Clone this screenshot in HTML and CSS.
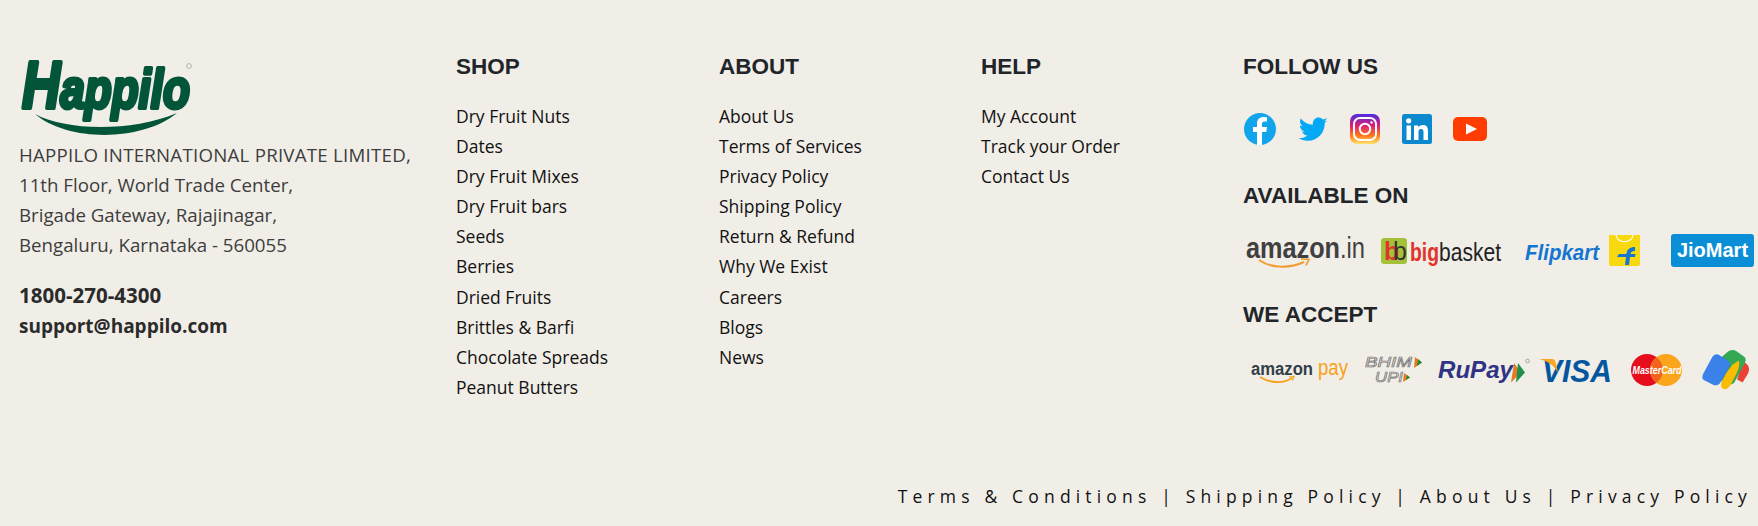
FILE: index.html
```html
<!DOCTYPE html>
<html lang="en">
<head>
<meta charset="UTF-8">
<meta name="viewport" content="width=device-width, initial-scale=1.0">
<title>Happilo Footer</title>
<link rel="stylesheet" href="styles.css">
</head>
<body>
<footer class="footer">
  <div class="footer-main">
    <div class="company">
      <svg class="logo" width="175" height="80" viewBox="0 0 175 80">
        <text class="logo-word" x="3" y="51" textLength="168" lengthAdjust="spacingAndGlyphs"><tspan class="logo-cap">H</tspan>appilo</text>
        <path d="M16 57 C45 73 110 76 158 56 C125 84 50 86 16 57 Z" fill="#03553a"/>
        <circle cx="170" cy="9" r="2.400" fill="none" stroke="#9aa89f" stroke-width="0.800"/>
      </svg>
      <p class="address"><span class="caps">HAPPILO INTERNATIONAL PRIVATE LIMITED,</span><br>11th Floor, World Trade Center,<br>Brigade Gateway, Rajajinagar,<br>Bengaluru, Karnataka - 560055</p>
      <p class="contact phone">1800-270-4300</p>
      <p class="contact">support@happilo.com</p>
    </div>

    <div class="links">
      <h3>SHOP</h3>
      <ul>
        <li>Dry Fruit Nuts</li>
        <li>Dates</li>
        <li>Dry Fruit Mixes</li>
        <li>Dry Fruit bars</li>
        <li>Seeds</li>
        <li>Berries</li>
        <li>Dried Fruits</li>
        <li>Brittles &amp; Barfi</li>
        <li>Chocolate Spreads</li>
        <li>Peanut Butters</li>
      </ul>
    </div>

    <div class="links">
      <h3>ABOUT</h3>
      <ul>
        <li>About Us</li>
        <li>Terms of Services</li>
        <li>Privacy Policy</li>
        <li>Shipping Policy</li>
        <li>Return &amp; Refund</li>
        <li>Why We Exist</li>
        <li>Careers</li>
        <li>Blogs</li>
        <li>News</li>
      </ul>
    </div>

    <div class="links">
      <h3>HELP</h3>
      <ul>
        <li>My Account</li>
        <li>Track your Order</li>
        <li>Contact Us</li>
      </ul>
    </div>

    <div class="side">
      <h3>FOLLOW US</h3>
      <div class="social">
        <svg width="32" height="32" viewBox="0 0 32 32">
          <circle cx="16" cy="16" r="16" fill="#12a5ec"/>
          <path d="M18 32V19h4.300l.7-5h-5v-3c0-1.500.6-2.500 2.600-2.500H23V4.200C22.400 4.100 21 4 19.500 4 15.800 4 13 6.200 13 10.500V14H9v5h4v13z" fill="#fff"/>
        </svg>
        <svg width="30" height="32" viewBox="0 0 30 32">
          <path d="M29.500 7.500c-1.100.5-2.200.8-3.400.9 1.200-.7 2.200-1.900 2.600-3.300-1.100.7-2.400 1.200-3.700 1.400C23.900 5.300 22.400 4.500 20.700 4.500c-3.300 0-5.900 2.700-5.900 6 0 .5.100.9.200 1.300C10 11.600 5.700 9.200 2.800 5.600 1.300 8.300 2.100 11.400 4.600 13.300c-1 0-1.900-.3-2.700-.7 0 2.900 2 5.300 4.800 5.900-.9.200-1.800.3-2.700.1.800 2.300 2.900 4 5.500 4-2.500 2-5.700 2.900-9 2.500 2.700 1.700 5.800 2.700 9.200 2.700 11 0 17-9.200 17-17.100v-.8c1.100-.8 2.100-1.900 2.800-2.700z" fill="#03a9f4"/>
        </svg>
        <svg width="30" height="32" viewBox="0 0 30 32">
          <defs>
            <linearGradient id="insta" x1="0.500" y1="1" x2="0.500" y2="0">
              <stop offset="0" stop-color="#ffe46a"/>
              <stop offset="0.280" stop-color="#ff7a1a"/>
              <stop offset="0.600" stop-color="#e0206f"/>
              <stop offset="1" stop-color="#4a2be8"/>
            </linearGradient>
          </defs>
          <rect y="1" width="30" height="30" rx="7" fill="url(#insta)"/>
          <rect x="4" y="5" width="22" height="22" rx="6" fill="none" stroke="#fff" stroke-width="2"/>
          <circle cx="15" cy="16" r="5.200" fill="none" stroke="#fff" stroke-width="2"/>
          <circle cx="21.500" cy="9.500" r="1.200" fill="#fff"/>
        </svg>
        <svg width="30" height="32" viewBox="0 0 30 32">
          <rect y="1" width="30" height="30" rx="2.500" fill="#0b88ce"/>
          <rect x="4.500" y="12.500" width="4.500" height="14.500" fill="#fff"/>
          <circle cx="6.700" cy="7.800" r="2.600" fill="#fff"/>
          <path d="M12 12.500h4.300v2c.8-1.400 2.400-2.400 4.500-2.400 4.200 0 5.200 2.700 5.200 6.500V27h-4.500v-7.500c0-1.800-.3-3.500-2.500-3.500s-2.500 1.700-2.500 3.600V27H12z" fill="#fff"/>
        </svg>
        <svg class="youtube" width="34" height="32" viewBox="0 0 34 32">
          <rect y="4" width="34" height="24" rx="5" fill="#ff3d00"/>
          <path d="M13 10.500 24 16 13 21.500z" fill="#fff"/>
        </svg>
      </div>

      <h3 class="available-title">AVAILABLE ON</h3>
      <div class="brands">
        <svg width="122" height="38" viewBox="0 0 122 38">
          <text class="amazon-word" x="3" y="26" textLength="94" lengthAdjust="spacingAndGlyphs">amazon</text>
          <text class="amazon-in" x="97" y="26" textLength="25" lengthAdjust="spacingAndGlyphs">.in</text>
          <path d="M16 28c11 8 30 9 45 2" fill="none" stroke="#f39a2e" stroke-width="2"/>
          <path d="M58 27l8 .5-3 6" fill="none" stroke="#f39a2e" stroke-width="1.600"/>
        </svg>
        <svg class="bigbasket" width="122" height="38" viewBox="0 0 122 38">
          <rect y="6" width="26" height="26" rx="3" fill="#a5c13a"/>
          <text class="bb-mark" x="3" y="28">b</text>
          <text class="bb-mark-dark" x="12" y="28">b</text>
          <text class="bb-big" x="29" y="29" textLength="29" lengthAdjust="spacingAndGlyphs">big</text>
          <text class="bb-basket" x="58" y="29" textLength="62" lengthAdjust="spacingAndGlyphs">basket</text>
        </svg>
        <svg class="flipkart" width="116" height="38" viewBox="0 0 116 38">
          <text class="fk-word" x="0" y="28" textLength="74" lengthAdjust="spacingAndGlyphs">Flipkart</text>
          <path d="M84 3h31v29a2 2 0 0 1-2 2H86a2 2 0 0 1-2-2z" fill="#f8d80f"/>
          <path d="M91 3c1 9 16 9 17 0" fill="none" stroke="#fff" stroke-width="1.200"/>
          <path d="M92 25h9l-1 8h4l1-8h5l.5-3h-5c.2-2 1.500-3 4.500-3v-4c-5 0-8 2-8.500 7H94z" fill="#1476d2"/>
        </svg>
        <div class="jiomart">JioMart</div>
      </div>

      <h3 class="accept-title">WE ACCEPT</h3>
      <div class="payments">
        <svg width="100" height="42" viewBox="0 0 100 42">
          <text class="apay-word" x="1" y="25" textLength="62" lengthAdjust="spacingAndGlyphs">amazon</text>
          <text class="apay-pay" x="68" y="25" textLength="30" lengthAdjust="spacingAndGlyphs">pay</text>
          <path d="M10 27c9 6 23 7 32 1" fill="none" stroke="#f7a11a" stroke-width="1.800"/>
          <path d="M39 27l5-.5-1.500 4" fill="none" stroke="#f7a11a" stroke-width="1.200"/>
        </svg>
        <svg class="upi" width="58" height="42" viewBox="0 0 58 42">
          <text class="upi-word" x="0" y="17" textLength="47" lengthAdjust="spacingAndGlyphs">BHIM</text>
          <path d="M50 7l7 5.500-8 5.500z" fill="#e97a1e"/>
          <path d="M53 9l4 3.500-5 3.500z" fill="#1f8a3a"/>
          <text class="upi-word" x="10" y="32" textLength="28" lengthAdjust="spacingAndGlyphs">UPI</text>
          <path d="M39 23l6 4.500-7 4.500z" fill="#e97a1e"/>
          <path d="M42 25l3 2.500-4 2.500z" fill="#1f8a3a"/>
        </svg>
        <svg class="rupay" width="92" height="42" viewBox="0 0 92 42">
          <text class="rupay-word" x="0" y="28" textLength="75" lengthAdjust="spacingAndGlyphs">RuPay</text>
          <path d="M76 13l7 9.500-10 10z" fill="#e57a28"/>
          <path d="M80 13l7 9.500-9 10z" fill="#1f8f4a"/>
          <circle cx="89.500" cy="11" r="1.800" fill="none" stroke="#777" stroke-width="0.600"/>
        </svg>
        <svg class="visa" width="74" height="42" viewBox="0 0 74 42">
          <text class="visa-word" x="3" y="32" textLength="70" lengthAdjust="spacingAndGlyphs">VISA</text>
          <path d="M0 9h13c2 0 3 1 3.500 3l2.500 11C16 16 9 11 0 9z" fill="#f7a823"/>
        </svg>
        <svg class="mastercard" width="52" height="42" viewBox="0 0 52 42">
          <circle cx="16" cy="20" r="16" fill="#e60d1d"/>
          <circle cx="35" cy="20" r="16" fill="#fba51c"/>
          <path d="M25.500 7.200a16 16 0 0 1 0 25.600 16 16 0 0 1 0-25.600z" fill="#f2641e"/>
          <text class="mc-word" x="1.500" y="24" textLength="49" lengthAdjust="spacingAndGlyphs">MasterCard</text>
        </svg>
        <svg class="gpay" width="48" height="41" viewBox="1 2 52 39" preserveAspectRatio="none">
          <path d="M33 6l11 6c6 3 10 6 7 12l-6 9-6-3 6-17z" fill="#ea4335"/>
          <path d="M13 16l14-11c4-3 7-4 11-2l8 5c3 2 3 4 1 7L36 33c-3 3-10 3-13 0z" fill="#34a853"/>
          <path d="M25 28c2-5 6-8 9-12l7-4c1 4 0 8-3 13l-6 10c-2 3-5 5-8 4-4-2-2-7 1-11z" fill="#fbbc04"/>
          <path d="M2 25 12 9c2-3 5-4 8-2l9 5c3 2 3 4 1 7L21 33c-2 3-5 3-8 2l-9-4c-3-1-3-3-2-6z" fill="#3a81ea"/>
        </svg>
      </div>
    </div>
  </div>

  <div class="footer-bottom">Terms &amp; Conditions | Shipping Policy | About Us | Privacy Policy</div>
</footer>
</body>
</html>
```

FILE: styles.css
```css
body {
  margin: 0;
  background-color: #f1eee8;
  font-family: "Open Sans", sans-serif;
}
svg {
  display: block;
  overflow: visible;
}
.footer {
  height: 526px;
  display: flex;
  flex-direction: column;
  justify-content: space-between;
  overflow: hidden;
}
.footer-main {
  display: grid;
  grid-template-columns: 456px 263px 262px 262px 1fr;
  padding-top: 54px;
}
h3 {
  margin: 0 0 21px;
  font-family: "Liberation Sans", Arial, sans-serif;
  font-size: 22.5px;
  line-height: 26px;
  font-weight: 700;
  color: #212529;
}

/* company block */
.company {
  padding-left: 19px;
}
.logo {
  margin-top: 3px;
}
.logo-word {
  font-family: "Liberation Sans", Arial, sans-serif;
  font-size: 55px;
  font-weight: 700;
  font-style: italic;
  fill: #03553a;
  stroke: #03553a;
  stroke-width: 4px;
  stroke-linejoin: round;
}
.logo-cap {
  font-size: 66px;
}
.address {
  margin: 3px 0 21px;
  font-size: 18.7px;
  line-height: 30px;
  color: #3d3d3d;
}
.caps {
  letter-spacing: 0.24px;
}
.contact {
  margin: 0 0 3px;
  font-size: 19px;
  line-height: 28px;
  font-weight: 700;
  color: #2b2b2b;
}
.phone {
  font-size: 20.5px;
}

/* link columns */
.links ul {
  margin: 0;
  padding: 0;
  list-style: none;
}
.links li {
  font-size: 17.5px;
  line-height: 30.1px;
  color: #111;
}

/* right column */
.side h3 {
  margin-bottom: 0;
}
.social {
  display: flex;
  gap: 22px;
  margin-top: 33px;
  padding-left: 1px;
}
.youtube {
  margin-left: -1px;
}
.side .available-title {
  margin-top: 38px;
}
.brands {
  display: flex;
  align-items: flex-start;
  margin-top: 23px;
  gap: 15px;
}
.bigbasket {
  margin-left: 1px;
}
.flipkart {
  margin-left: 7px;
}
.jiomart {
  margin: 2px 0 0 15px;
  width: 83px;
  height: 33px;
  background-color: #0a8fd6;
  border-radius: 3px;
  color: #fff;
  font-family: "Liberation Sans", Arial, sans-serif;
  font-size: 20px;
  font-weight: 700;
  line-height: 33px;
  text-align: center;
}
.side .accept-title {
  margin-top: 32px;
}
.payments {
  display: flex;
  align-items: flex-start;
  margin-top: 22px;
  padding-left: 7px;
}
.upi {
  margin-left: 15px;
}
.rupay {
  margin-left: 15px;
}
.visa {
  margin-left: 9px;
}
.mastercard {
  margin-left: 18px;
}
.gpay {
  margin-left: 19px;
}

/* logo wordings */
.amazon-word {
  font-family: "Liberation Sans", Arial, sans-serif;
  font-size: 30px;
  font-weight: 700;
  fill: #404040;
}
.amazon-in {
  font-family: "Liberation Sans", Arial, sans-serif;
  font-size: 30px;
  fill: #404040;
}
.bb-mark {
  font-family: "Liberation Sans", Arial, sans-serif;
  font-size: 25px;
  font-weight: 700;
  fill: #e0352b;
}
.bb-mark-dark {
  font-family: "Liberation Sans", Arial, sans-serif;
  font-size: 25px;
  fill: #333;
}
.bb-big {
  font-family: "Liberation Sans", Arial, sans-serif;
  font-size: 26px;
  font-weight: 700;
  fill: #e0352b;
}
.bb-basket {
  font-family: "Liberation Sans", Arial, sans-serif;
  font-size: 26px;
  fill: #222;
}
.fk-word {
  font-family: "Liberation Sans", Arial, sans-serif;
  font-size: 22px;
  font-weight: 700;
  font-style: italic;
  fill: #1476d2;
}
.apay-word {
  font-family: "Liberation Sans", Arial, sans-serif;
  font-size: 18px;
  font-weight: 700;
  fill: #333e48;
}
.apay-pay {
  font-family: "Liberation Sans", Arial, sans-serif;
  font-size: 22px;
  fill: #f7a11a;
}
.upi-word {
  font-family: "Liberation Sans", Arial, sans-serif;
  font-size: 14px;
  font-style: italic;
  fill: none;
  stroke: #777;
  stroke-width: 0.7px;
}
.rupay-word {
  font-family: "Liberation Sans", Arial, sans-serif;
  font-size: 24px;
  font-weight: 700;
  font-style: italic;
  fill: #2f3384;
}
.visa-word {
  font-family: "Liberation Sans", Arial, sans-serif;
  font-size: 32px;
  font-weight: 700;
  font-style: italic;
  fill: #04579f;
}
.mc-word {
  font-family: "Liberation Sans", Arial, sans-serif;
  font-size: 10px;
  font-weight: 700;
  font-style: italic;
  fill: #fff;
}

/* bottom strip */
.footer-bottom {
  padding: 0 6px 16px 0;
  text-align: right;
  font-size: 17.5px;
  line-height: 28px;
  letter-spacing: 5.17px;
  color: #111;
}
```
